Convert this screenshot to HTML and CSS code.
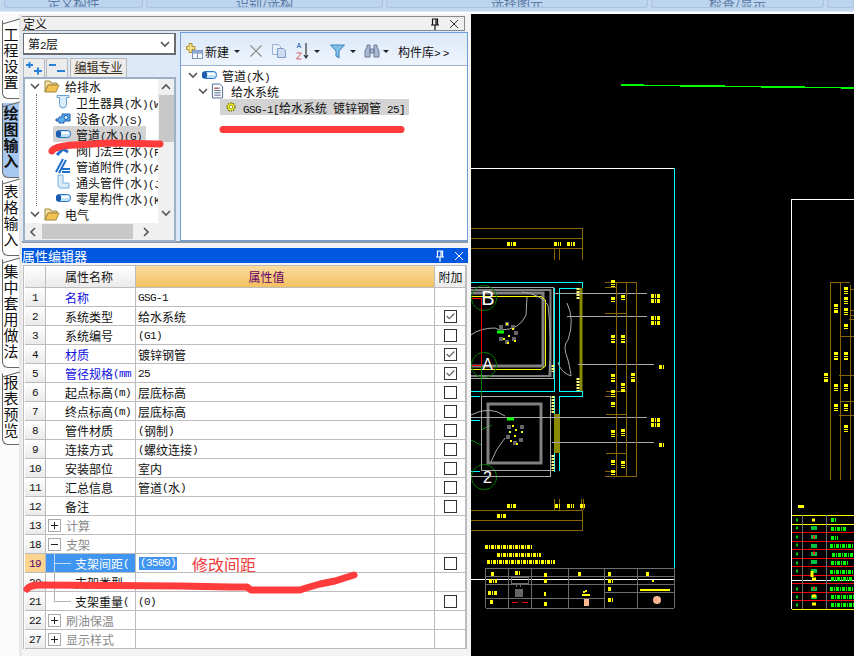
FILE: index.html
```html
<!DOCTYPE html>
<html lang="zh">
<head>
<meta charset="utf-8">
<title>定义</title>
<link rel="stylesheet" href="styles.css">
</head>
<body>
<svg class="defs">
  <symbol id="pipe" viewBox="0 0 16 16"><rect x="1.500" y="4.500" width="14" height="7" rx="3" fill="#bfe2fa" stroke="#2a73c8"/><rect x="1" y="4.500" width="5" height="7" rx="2.500" fill="#1c5cb0"/><rect x="7" y="6" width="7" height="2" fill="#fff"/></symbol>
  <symbol id="folder" viewBox="0 0 16 16"><path d="M1 3h5l1 2h6v2H4L1 14z" fill="#f5e2a0" stroke="#a08a40"/><path d="M4 7h11l-3 7H1z" fill="#f2c14e" stroke="#a08a40"/></symbol>
  <symbol id="chev" viewBox="0 0 10 10"><path d="M1 3l4 4 4-4" fill="none" stroke="#555" stroke-width="1.600"/></symbol>
  <symbol id="basin" viewBox="0 0 16 16"><path d="M2 1.500h12v2h-2.500v7a3.500 3.500 0 0 1-7 0v-7H2z" fill="#d8ecfa" stroke="#6aa0d0"/></symbol>
  <symbol id="pump" viewBox="0 0 16 16"><path d="M1 9h3V7h3V4h8v7H9v2H4v-2H1z" fill="#58b0ee" stroke="#1c5cb0"/><circle cx="11" cy="7.500" r="2" fill="#e0f2ff" stroke="#1c5cb0"/></symbol>
  <symbol id="fitting" viewBox="0 0 16 16"><path d="M1 14L8 1M4 15L11 2M7 11h8M7 14h8" fill="none" stroke="#1f6fd0" stroke-width="2"/></symbol>
  <symbol id="elbow" viewBox="0 0 16 16"><path d="M3 1h5v8h6v5H5l-2-2z" fill="#d8ecfa" stroke="#7ab0dc"/></symbol>
  <symbol id="valve" viewBox="0 0 16 16"><path d="M2 13l6-6 5 3" fill="none" stroke="#1f6fd0" stroke-width="3"/></symbol>
  <symbol id="doc" viewBox="0 0 14 16"><path d="M1.500.5h8l3 3v12h-11z" fill="#fff" stroke="#46608a"/><path d="M3.500 5h6M3.500 7.500h7M3.500 10h7M3.500 12.500h7" stroke="#46608a"/><path d="M3.500 5h4" stroke="#d04030"/></symbol>
  <symbol id="gear" viewBox="0 0 12 12"><circle cx="6" cy="6" r="4" fill="#f4f020" stroke="#5a5a10" stroke-width="1.200" stroke-dasharray="1.500 1"/><circle cx="6" cy="6" r="1.800" fill="#fff" stroke="#8a8a20" stroke-width=".8"/></symbol>
  <symbol id="pin" viewBox="0 0 10 12"><path d="M2.500 1h5v6h-5zM1 7h8M5 7v5M6 1v6" fill="none" stroke="currentColor" stroke-width="1.200"/></symbol>
  <symbol id="close" viewBox="0 0 10 10"><path d="M1 1l8 8M9 1l-8 8" stroke="currentColor" fill="none"/></symbol>
  <symbol id="tick" viewBox="0 0 13 13"><path d="M2 6l3 3 6-6" fill="none" stroke="#666" stroke-width="1.600"/></symbol>
</svg>

<div class="app">
  <div class="topbar">
    <div class="topbtn w-a">定义构件</div>
    <div class="topbtn w-b">识别/选构</div>
    <div class="topbtn w-c">选择图元</div>
    <div class="topbtn w-d">检查/显示</div>
    <div class="topbtn w-e"></div>
  </div>
  <div class="main">
    <nav class="rail">
      <div class="tab tab-a">工程设置</div>
      <div class="tab tab-b tab-on">绘图输入</div>
      <div class="tab tab-c">表格输入</div>
      <div class="tab tab-d">集中套用做法</div>
      <div class="tab tab-e">报表预览</div>
    </nav>
    <div class="work">
      <section class="define">
        <header class="head">
          <span class="head-title">定义</span>
          <svg class="pin"><use href="#pin"/></svg>
          <svg class="close"><use href="#close"/></svg>
        </header>
        <div class="define-body">
          <div class="left">
            <div class="combo"><span>第<span class="lat">2</span>层</span><svg class="combo-arrow"><use href="#chev"/></svg></div>
            <div class="mini">
              <button class="mini-btn"><svg width="17" height="14" viewBox="0 0 17 14"><path d="M0 4h7M3.500 1v6M8 10h8M12 6.500v7" stroke="#2a80d8" stroke-width="2" fill="none"/></svg></button>
              <button class="mini-btn"><svg width="17" height="14" viewBox="0 0 17 14"><path d="M0 4h7M8 10h8" stroke="#2a80d8" stroke-width="2" fill="none"/></svg></button>
              <div class="mini-tab">编辑专业</div>
            </div>
            <div class="ltree">
              <div class="ltree-top">
                <div class="ltree-list">
                  <div class="tr"><svg class="chev"><use href="#chev"/></svg><svg class="ic16 g4"><use href="#folder"/></svg><span>给排水</span></div>
                  <div class="tkids">
                    <div class="kid"><svg class="ic16"><use href="#basin"/></svg><span>卫生器具<span class="lat">(</span>水<span class="lat">)(W</span></span></div>
                    <div class="kid"><svg class="ic16"><use href="#pump"/></svg><span>设备<span class="lat">(</span>水<span class="lat">)(S)</span></span></div>
                    <div class="kid kid-on"><svg class="ic16"><use href="#pipe"/></svg><span>管道<span class="lat">(</span>水<span class="lat">)(G)</span></span></div>
                    <div class="kid"><svg class="ic16"><use href="#valve"/></svg><span>阀门法兰<span class="lat">(</span>水<span class="lat">)(F</span></span></div>
                    <div class="kid"><svg class="ic16"><use href="#fitting"/></svg><span>管道附件<span class="lat">(</span>水<span class="lat">)(A</span></span></div>
                    <div class="kid"><svg class="ic16"><use href="#elbow"/></svg><span>通头管件<span class="lat">(</span>水<span class="lat">)(J</span></span></div>
                    <div class="kid"><svg class="ic16"><use href="#pipe"/></svg><span>零星构件<span class="lat">(</span>水<span class="lat">)(K</span></span></div>
                  </div>
                  <div class="tr"><svg class="chev"><use href="#chev"/></svg><svg class="ic16 g4"><use href="#folder"/></svg><span>电气</span></div>
                </div>
                <div class="vbar">
                  <svg class="sb-up" width="10" height="10" viewBox="0 0 10 10"><path d="M1 7l4-4 4 4" fill="none" stroke="#555" stroke-width="1.600"/></svg>
                  <div class="vthumb"></div>
                  <svg class="sb-down" width="10" height="10" viewBox="0 0 10 10"><path d="M1 3l4 4 4-4" fill="none" stroke="#555" stroke-width="1.600"/></svg>
                </div>
              </div>
              <div class="hbar">
                <svg width="10" height="10" viewBox="0 0 10 10"><path d="M7 1L3 5l4 4" fill="none" stroke="#555" stroke-width="1.600"/></svg>
                <div class="hthumb"></div>
                <svg width="10" height="10" viewBox="0 0 10 10"><path d="M3 1l4 4-4 4" fill="none" stroke="#555" stroke-width="1.600"/></svg>
              </div>
            </div>
          </div>
          <div class="right">
            <div class="toolbar">
              <svg class="tb-new" width="17" height="16" viewBox="0 0 17 16"><path d="M3 0.500h3v3h3v3H6v3H3v-3H0.500v-3H3z" fill="#f4e28a" stroke="#b09030"/><rect x="6.500" y="7.500" width="10" height="8" fill="#f4f8fc" stroke="#7a94b8"/><path d="M6.500 10h10M11.500 10v5.500" stroke="#7a94b8"/><rect x="6.500" y="7.500" width="10" height="2.500" fill="#8eaad0"/></svg>
              <span class="tb-text">新建</span>
              <i class="drop d-new"></i>
              <svg class="tb-x" width="12" height="12" viewBox="0 0 12 12"><path d="M.5.500l11 11M11.500.500l-11 11" stroke="#8a8a8a" stroke-width="1.200"/></svg>
              <svg class="tb-copy" width="16" height="14" viewBox="0 0 16 14"><path d="M1.500.5h6l2 2v8h-8z" fill="#e8eef8" stroke="#9ab0d0"/><path d="M6.500 4.500h6l2 2v7h-8z" fill="#cfdcf0" stroke="#7f9cc8"/></svg>
              <svg class="tb-sort" width="14" height="18" viewBox="0 0 14 18"><path d="M2 6l2-5 2 5M3 4.500h2" fill="none" stroke="#4a7ac0"/><path d="M1.500 11h5l-5 6h5" fill="none" stroke="#d06060"/><path d="M11 1v14M9 13l2 3 2-3" fill="none" stroke="#333" stroke-width="1.200"/></svg>
              <i class="drop d-sort"></i>
              <svg class="tb-filter" width="15" height="15" viewBox="0 0 15 15"><path d="M.5 1h14L9 7v7L6 12V7z" fill="#7fc0ea" stroke="#3a82b8"/></svg>
              <i class="drop d-filter"></i>
              <svg class="tb-bino" width="16" height="14" viewBox="0 0 16 14"><path d="M1 13V7l2-4V1h3v12zM15 13V7l-2-4V1h-3v12zM6 5h4v4H6z" fill="#aab8d0" stroke="#6a7a98"/></svg>
              <i class="drop d-bino"></i>
              <span class="tb-text tb-lib">构件库<span class="lat wide">&gt;&gt;</span></span>
            </div>
            <div class="rtree">
              <div class="rrow r1"><svg class="chev"><use href="#chev"/></svg><svg class="ic16 g1"><use href="#pipe"/></svg><span>管道<span class="lat">(</span>水<span class="lat">)</span></span></div>
              <div class="rrow r2"><svg class="chev"><use href="#chev"/></svg><svg class="ic-doc"><use href="#doc"/></svg><span>给水系统</span></div>
              <div class="rrow r3"><div class="rsel"><svg class="ic-gear"><use href="#gear"/></svg><span class="pre"><span class="lat">GSG-1[</span>给水系统<span class="lat"> </span>镀锌钢管<span class="lat"> 25]</span></span></div></div>
            </div>
          </div>
        </div>
      </section>

      <section class="props">
        <header class="props-title">
          <span>属性编辑器</span>
          <svg class="pin"><use href="#pin"/></svg>
          <svg class="close"><use href="#close"/></svg>
        </header>
        <div class="grid">
          <div class="row row-head"><div class="c idx"></div><div class="c name center">属性名称</div><div class="c val val-head">属性值</div><div class="c add add-head">附加</div></div>
          <div class="row"><div class="c idx">1</div><div class="c name link">名称</div><div class="c val"><span class="lat">GSG-1</span></div><div class="c add"></div></div>
          <div class="row"><div class="c idx">2</div><div class="c name">系统类型</div><div class="c val">给水系统</div><div class="c add"><span class="cb"><svg><use href="#tick"/></svg></span></div></div>
          <div class="row"><div class="c idx">3</div><div class="c name">系统编号</div><div class="c val"><span class="lat">(G1)</span></div><div class="c add"><span class="cb"></span></div></div>
          <div class="row"><div class="c idx">4</div><div class="c name link">材质</div><div class="c val">镀锌钢管</div><div class="c add"><span class="cb"><svg><use href="#tick"/></svg></span></div></div>
          <div class="row"><div class="c idx">5</div><div class="c name link">管径规格<span class="lat">(mm</span></div><div class="c val"><span class="lat">25</span></div><div class="c add"><span class="cb"><svg><use href="#tick"/></svg></span></div></div>
          <div class="row"><div class="c idx">6</div><div class="c name">起点标高<span class="lat">(m)</span></div><div class="c val">层底标高</div><div class="c add"><span class="cb"></span></div></div>
          <div class="row"><div class="c idx">7</div><div class="c name">终点标高<span class="lat">(m)</span></div><div class="c val">层底标高</div><div class="c add"><span class="cb"></span></div></div>
          <div class="row"><div class="c idx">8</div><div class="c name">管件材质</div><div class="c val"><span class="lat">(</span>钢制<span class="lat">)</span></div><div class="c add"><span class="cb"></span></div></div>
          <div class="row"><div class="c idx">9</div><div class="c name">连接方式</div><div class="c val"><span class="lat">(</span>螺纹连接<span class="lat">)</span></div><div class="c add"><span class="cb"></span></div></div>
          <div class="row"><div class="c idx">10</div><div class="c name">安装部位</div><div class="c val">室内</div><div class="c add"><span class="cb"></span></div></div>
          <div class="row"><div class="c idx">11</div><div class="c name">汇总信息</div><div class="c val">管道<span class="lat">(</span>水<span class="lat">)</span></div><div class="c add"><span class="cb"></span></div></div>
          <div class="row"><div class="c idx">12</div><div class="c name">备注</div><div class="c val"></div><div class="c add"><span class="cb"></span></div></div>
          <div class="row"><div class="c idx">13</div><div class="c name group"><i class="exp plus"></i>计算</div><div class="c val"></div><div class="c add"></div></div>
          <div class="row"><div class="c idx">18</div><div class="c name group"><i class="exp"></i>支架</div><div class="c val"></div><div class="c add"></div></div>
          <div class="row row-on"><div class="c idx idx-on">19</div><div class="c name sub sub-on">支架间距<span class="lat">(</span></div><div class="c val"><span class="sel-val lat">(3500)</span><span class="note">修改间距</span></div><div class="c add"><span class="cb"></span></div></div>
          <div class="row"><div class="c idx">20</div><div class="c name sub">支架类型</div><div class="c val"></div><div class="c add"></div></div>
          <div class="row"><div class="c idx">21</div><div class="c name sub sub-end">支架重量<span class="lat">(</span></div><div class="c val"><span class="lat">(0)</span></div><div class="c add"><span class="cb"></span></div></div>
          <div class="row"><div class="c idx">22</div><div class="c name group"><i class="exp plus"></i>刷油保温</div><div class="c val"></div><div class="c add"></div></div>
          <div class="row"><div class="c idx">27</div><div class="c name group"><i class="exp plus"></i>显示样式</div><div class="c val"></div><div class="c add"></div></div>
        </div>
      </section>
    </div>

    <svg class="cad" viewBox="471 14 383 642" width="383" height="642">
      <!-- top run -->
      <path class="gn" d="M621 85h23" stroke-width="2"/><path class="gn" d="M644 85.500h36"/><path class="gn" d="M680 86h45" stroke-width="2"/><path class="gn" d="M725 86.500h36"/><path class="gn" d="M761 87h44" stroke-width="2"/><path class="gn" d="M805 87.500h36"/><path class="gn" d="M841 88h13" stroke-width="2"/>
      <!-- sheet frames -->
      <path class="wh" d="M471 168.500H674"/>
      <path class="cy" d="M674.500 168V568"/>
      <path class="wh" d="M791.500 609V199.500H854"/>
      <path class="wh" d="M471 579.500H674"/>
      <!-- upper dimensions -->
      <path class="br" d="M471 228.500H582.500V260M471 238.500H582M471 248.500H582M554.500 248V260M559.500 248V260"/>
      <path class="lb" d="M507 244h9M554 244h7M567 244h8"/>
      <!-- cyan walls -->
      <path class="cy" d="M471 282.500H582.500V288M559 288.500H582M554.500 288V391.500H471M559.500 288V391M559 391.500H582.500V396.500H559.500V414.500H554.500V396M471 396.500H480M554.500 453V471.500M559.500 453V471M471 471.500H480M471 420.500H480"/>
      <!-- room one -->
      <path class="lg" d="M471 287.500H553.500V378.500H471"/>
      <path class="gr2" d="M471 290H550.500V376H471"/>
      <path class="gr3" d="M471 293H543V366H471"/>
      <path class="ye1" d="M471 296.500H541L545.500 300V366L541 369.500H471"/>
      <path class="lg nf" d="M471 335Q480 328 495 328L500 330Q520 330 526 315L527 297M522 292Q540 294 548 305Q552 340 549 375M567 303Q575 320 568 340Q562 345 568 360Q571 373 571 376Q560 372 558 362"/>
      <path class="ol" d="M581 288V391"/>
      <path class="ylb" d="M578 288V300M578 378V391M553 365V372"/>
      <path class="lg" d="M554 293.500H647M567 316.500H647M578 364.500H654"/>
      <!-- fixture one -->
      <g class="fx">
        <rect x="499" y="325" width="4" height="4"/><rect x="505" y="322" width="4" height="4"/><rect x="511" y="325" width="4" height="4"/><rect x="514" y="331" width="4" height="4"/><rect x="499" y="337" width="4" height="4"/><rect x="505" y="340" width="4" height="4"/><rect x="512" y="337" width="4" height="4"/>
      </g>
      <path class="ydot" d="M506 324h2M512 329h2M503 339h2M508 336h2M514 341h2M507 343h2"/>
      <path class="gn" d="M497 332h7" stroke-width="3"/>
      <!-- red risers and grid bubbles -->
      <path class="rd" d="M472 298.500H481.500V365.500H472"/>
      <path class="gd" d="M481 366V445L471 440M481 430L492 425"/>
      <circle class="bub" cx="484" cy="298" r="12.500"/><circle class="bub" cx="484" cy="365" r="12.500"/><circle class="bub" cx="484" cy="477" r="12.500"/>
      <text class="bubt bubt-b" x="488" y="305">B</text><text class="bubt" x="487.500" y="370">A</text><text class="bubt" x="487.500" y="483">2</text>
      <!-- room two -->
      <path class="lg" d="M481 396.500H550V476.500H471M481 396V470H550"/>
      <path class="gr3" d="M488 404H541V463H488z"/>
      <path class="lg nf" d="M471 415Q490 405 505 416M505 438Q495 450 491 462"/>
      <path class="ol" d="M555.500 414V453M558.500 414V453"/>
      <path class="ylb" d="M553 396V414M553 455V471"/>
      <path class="lg" d="M471 417.500H647M552 442.500H654"/>
      <g class="fx">
        <rect x="507" y="425" width="4" height="4"/><rect x="520" y="425" width="4" height="4"/><rect x="506" y="435" width="4" height="4"/><rect x="519" y="438" width="4" height="4"/><rect x="513" y="441" width="4" height="4"/>
      </g>
      <path class="ydot" d="M512 426h2M515 430h2M509 432h2M521 432h2M514 436h2M510 441h2M516 444h2"/>
      <path class="gn" d="M507 419h7" stroke-width="3"/>
      <!-- right dimensions -->
      <path class="br" d="M605 282.500H636.500V476.500H605M616.500 282V477M626.500 282V476M605 287.500H616M605 313.500H626M606 391.500H626M605 396.500H616M606 414.500H626M606 453.500H627M605 471.500H616"/>
      <path class="lv" d="M613 280v7M613 297v6M613 335v8M613 374v8M613 390v7M613 402v6M623 295v6M623 335v8M623 383v10M633 373v10M613 430v7M613 460v5M613 470v6M623 429v7M623 461v7"/>
      <path class="lb" d="M651 296h10M651 301h10M651 318h10M651 323h10M659 367h6M651 420h10M651 425h10M659 445h6"/>
      <!-- lower dimensions -->
      <path class="br" d="M554.500 499V510M559.500 499V510M581.500 499V510M583.500 499V510M471 510.500H582.500V530.500H471M471 520.500H582"/>
      <path class="lb" d="M507 506h9M555 506h6M567 506h7M580 506h5M497 516h10"/>
      <!-- notes -->
      <path class="lb" d="M485 547h48M497 555h44M487 562h68"/>
      <!-- title block -->
      <path class="tb" d="M485.500 568.500H674M485.500 576.500H674M485.500 584.500H674M485.500 598.500H604M604 592.500H674M485.500 608.500H674M485.500 568V608M508.500 568V608M531.500 568V608M568.500 568V608M604.500 568V608M637.500 568V608M674.500 568V608"/>
      <rect class="tb-fill" x="515" y="589" width="8" height="8"/>
      <path class="tb" d="M511 577h17v6h-17zM516 583v4M520 583v4"/>
      <path class="lb" d="M491 574h4M515 573h5M544 575h4M578 574h4M608 574h4M646 574h4M489 581h8M544 581h3M608 581h5M488 593h10M544 594h2M608 589h4M608 600h6M544 604h4M490 602h4"/>
      <path class="rd" d="M512 602.500h6M522 602.500h6"/>
      <path class="ydot" d="M585 591h2M582 595h8M583 592h2M652 581h2M640 590h30"/>
      <rect class="peach" x="584" y="599" width="5" height="7"/>
      <circle class="peach" cx="657" cy="600" r="4"/>
      <!-- right drawing labels -->
      <path class="br" d="M830.500 282V480M840.500 282V480M850.500 285V480M830 282.500H850M840 336.500H854M839 375.500H854M840 401.500H854M839 415.500H854M850 289.500H854M850 310.500H854M850 315.500H854M849 319.500H854"/>
      <path class="lv" d="M846 287v7M846 297v7M846 308v7M846 324v6M836 304v9M846 352v8M836 352v8M836 384v7M846 384v7M836 404v7M846 404v7M826 373v10M846 425v7"/>
      <!-- legend table -->
      <rect class="yrect" x="798" y="505" width="6" height="3"/>
      <path class="yl" d="M792 515.500H854M792 524.500H854M792 609.500H854"/>
      <path class="rl" d="M792 532.500H854M792 541.500H854M792 549.500H854M792 558.500H854M792 566.500H854M792 575.500H854M792 583.500H854M792 592.500H854M792 600.500H854"/>
      <path class="wh" d="M792 580.500H854"/>
      <path class="tb" d="M802.500 515V609M826.500 515V609"/>
      <path class="gt" d="M831 520h6M831 529h16M831 538h7M830 546h24M832 555h22M831 563h18M830 572h24M831 579h22M830 589h24M831 597h23M831 605h23"/>
      <path class="gi" d="M796 520h2M796 528h2M796 537h2M796 545h2M796 554h2M796 563h2M796 571h2M796 589h2M796 597h2M796 605h2"/>
      <path class="gi2" d="M811 528h6M811 537h6M811 546h6M811 554h6M811 562h6M811 571h6M811 589h6M811 597h6"/>
      <path class="ri" d="M813 537h2M813 553h2M813 588h2M813 596h2"/>
      <path class="yi" d="M812 520h3M812 571v6M812 579h4M812 596h4M812 604h4"/>
    </svg>
  </div>
</div>

<svg class="marks" width="854" height="656" viewBox="0 0 854 656">
  <path d="M52 151Q54 146 75 145L110 143L160 144" stroke-width="7"/>
  <path d="M223 129.500H401" stroke-width="7"/>
  <path d="M27 589Q30 585 40 585L180 586L230 587H247L251 590H300L306 588L320 584L335 581L354 575" stroke-width="7"/>
</svg>
</body>
</html>
```
FILE: styles.css
```css
* { box-sizing: border-box; }
html, body { margin: 0; padding: 0; }
body {
  width: 854px;
  height: 656px;
  overflow: hidden;
  position: relative;
  background: #f4f4f4;
  font-family: "Noto Sans CJK SC", "Liberation Sans", sans-serif;
  font-size: 12px;
  color: #111;
}
.defs { display: none; }
.lat {
  font-family: "Liberation Mono", monospace;
  font-size: 11px;
  letter-spacing: -.6px;
  white-space: pre;
}
.wide { letter-spacing: 2px; }
.pre { white-space: pre; }

.app { display: flex; flex-direction: column; width: 854px; height: 656px; }

/* top strip */
.topbar {
  height: 14px;
  display: flex;
  gap: 3px;
  padding: 0 3px 0 4px;
  background: linear-gradient(#c3d8ef 0, #c3d8ef 11px, #fff 12px);
  flex: none;
}
.topbtn {
  height: 8px;
  background: #bdd4ee;
  border: 1px solid #a9c3e0;
  border-top: 0;
  border-radius: 0 0 3px 3px;
  text-align: center;
  font-size: 13px;
  line-height: 5px;
  color: #5a7aa6;
  overflow: hidden;
}
.w-a { width: 139px; }
.w-b { width: 237px; }
.w-c { width: 262px; }
.w-d { width: 173px; }
.w-e { flex: 1; margin-right: -3px; }

.main { display: flex; flex: 1; min-height: 0; }

/* vertical tabs */
.rail {
  width: 22px;
  flex: none;
  padding-top: 6px;
  background: #fafafa;
  border-right: 3px solid;
  border-image: linear-gradient(90deg, #8d9bab 66%, #e8e8e8 66%) 1;
}
.tab {
  width: 17px;
  margin-left: 2px;
  text-align: center;
  font-size: 15px;
  line-height: 16px;
  background: #fff;
  border: 1px solid #666;
  border-right: 0;
  border-top-color: transparent;
  border-radius: 0 0 0 6px;
  color: #111;
  position: relative;
}
.tab::before {
  content: "";
  position: absolute;
  left: -1px;
  top: 0;
  width: 18px;
  height: 1px;
  background: #666;
  transform: translateY(0) rotate(-16deg);
}
.tab-a { height: 79px; padding-top: 5px; }
.tab-b { height: 75px; margin-top: 4px; padding-top: 1px; }
.tab-c { height: 76px; margin-top: 2px; padding-top: 2px; }
.tab-d { height: 109px; margin-top: 3px; padding-top: 3px; }
.tab-e { height: 72px; margin-top: 5px; padding-top: 0; }
.tab-on { background: #a6c8f0; font-weight: 700; }

.work { width: 449px; flex: none; padding-top: 2px; display: flex; flex-direction: column; }

/* definition dock */
.define { height: 227px; flex: none; padding-right: 3px; border-bottom: 2px solid #8c9aa8; width: 446px; }
.head {
  height: 15px;
  display: flex;
  align-items: center;
  background: #f0f0f0;
  border: 1px solid #8a8a8a;
  border-left: 0;
  padding-right: 5px;
  color: #111;
}
.head-title { flex: 1; padding-left: 1px; line-height: 13px; }
.pin { width: 10px; height: 12px; color: #111; margin-right: 9px; }
.close { width: 10px; height: 10px; color: #333; }

.define-body {
  height: 210px;
  display: flex;
  background: #dce9f9;
  padding-top: 1px;
  gap: 4px;
}
.left { width: 154px; padding-left: 1px; flex: none; }
.combo {
  height: 22px;
  margin-top: 1px;
  background: #fff;
  border: 2px solid #6c6c6c;
  border-top-width: 1px;
  border-left-width: 1px;
  display: flex;
  align-items: center;
  padding: 0 4px;
  justify-content: space-between;
  font-size: 12px;
}
.combo-arrow { width: 10px; height: 10px; }
.mini { display: flex; height: 19px; margin-top: 3px; gap: 1px; }
.mini-btn {
  width: 22px;
  height: 19px;
  padding: 0;
  background: #ececec;
  border: 1px solid #b8b8b8;
  border-bottom: 0;
  display: flex;
  align-items: center;
  justify-content: center;
}
.mini-tab {
  margin-left: 1px;
  width: 57px;
  background: #ececec;
  border: 1px solid #b8b8b8;
  border-bottom: 0;
  text-align: center;
  font-size: 12px;
  line-height: 16px;
  text-decoration: underline;
  color: #3a3020;
}
.ltree {
  height: 165px;
  background: #fff;
  border: 2px solid #9cb0c8;
  display: flex;
  flex-direction: column;
}
.ltree-top { display: flex; flex: 1; min-height: 0; }
.ltree-list { width: 133px; overflow: hidden; flex: none; margin-top: -1px; }
.tr { height: 16px; display: flex; align-items: center; padding-left: 5px; white-space: nowrap; }
.chev { width: 10px; height: 10px; flex: none; }
.ic16 { width: 16px; height: 16px; flex: none; }
.g4 { margin: 0 5px 0 4px; }
.tkids { margin-left: 11px; border-left: 1px dotted #777; }
.kid {
  height: 16px;
  display: flex;
  align-items: center;
  gap: 5px;
  margin-left: 16px;
  padding-left: 2px;
  white-space: nowrap;
}
.kid-on { background: #d3d3d3; width: 93px; }
.vbar { width: 16px; flex: none; display: flex; flex-direction: column; align-items: center; background: #f0f0f0; }
.sb-up { margin-top: 3px; flex: none; }
.vthumb { width: 15px; height: 47px; background: #c8c8c8; margin-top: 3px; }
.sb-down { margin-top: 66px; flex: none; }
.hbar { height: 17px; flex: none; background: #f0f0f0; display: flex; align-items: center; padding-left: 3px; }
.hthumb { width: 91px; height: 15px; background: #c8c8c8; margin: 0 8px 0 4px; }

.right { width: 288px; flex: none; border: 1px solid #6e9fd8; height: 209px; background: #dce9f9; }
.toolbar {
  height: 32px;
  display: flex;
  align-items: center;
  padding-left: 5px;
  padding-top: 4px;
  background: linear-gradient(#dce9f9, #eef4fc);
}
.tb-text { font-size: 12px; white-space: nowrap; }
.tb-new { margin-right: 2px; }
.drop {
  width: 0; height: 0;
  border-left: 3px solid transparent;
  border-right: 3px solid transparent;
  border-top: 3px solid #222;
}
.d-new { margin-left: 5px; }
.tb-x { margin-left: 10px; }
.tb-copy { margin-left: 9px; }
.tb-sort { margin-left: 8px; }
.d-sort { margin-left: 5px; }
.tb-filter { margin-left: 10px; }
.d-filter { margin-left: 5px; }
.tb-bino { margin-left: 8px; }
.d-bino { margin-left: 3px; }
.tb-lib { margin-left: 9px; }
.rtree { height: 175px; background: #fff; padding-top: 1px; border-top: 1px solid #9cb0c8; }
.rrow { height: 16px; display: flex; align-items: center; white-space: nowrap; }
.r1 { padding-left: 7px; }
.g1 { margin: 0 5px 0 3px; }
.r2 { padding-left: 17px; }
.ic-doc { width: 13px; height: 16px; margin: 0 7px 0 3px; flex: none; }
.r3 { padding-left: 39px; }
.rsel { display: flex; align-items: center; height: 16px; background: #d3d3d3; width: 189px; padding-left: 5px; }
.ic-gear { width: 12px; height: 12px; margin-right: 6px; flex: none; }

/* property editor */
.props { margin-top: 5px; width: 446px; }
.props-title {
  height: 15px;
  background: #0058e0;
  color: #fff;
  display: flex;
  align-items: center;
  font-size: 13px;
  padding-right: 4px;
}
.props-title span { flex: 1; line-height: 15px; }
.props-title .pin, .props-title .close { color: #fff; }
.grid {
  margin: 2px 0 0 1px;
  width: 444px;
  padding-left: 1px;
  border: 1px solid #bcbcbc;
  border-width: 1px 2px 0 1px;
  background: #fff;
}
.row {
  display: grid;
  grid-template-columns: 21px 90px 299px 31px;
  height: 19px;
}
.row-head { height: 22px; }
.c {
  border-right: 1px solid #bcbcbc;
  border-bottom: 1px solid #bcbcbc;
  display: flex;
  align-items: center;
  white-space: nowrap;
  overflow: hidden;
  line-height: 18px;
  padding-top: 1px;
}
.idx {
  background: linear-gradient(#fff, #eaeaea);
  justify-content: center;
  font-family: "Liberation Mono", monospace;
  font-size: 11px;
  letter-spacing: -.6px;
}
.idx-on { background: #fbd48f; color: #5a0070; }
.name { padding-left: 19px; }
.center { background: linear-gradient(#fff, #eaeaea); }
.link { color: #1010e0; }
.val { padding-left: 2px; }
.val-head {
  justify-content: center;
  background: linear-gradient(#fbdc9f, #f2c060);
  color: #660066;
  font-size: 12px;
  padding-right: 39px;
}
.add { justify-content: center; padding-left: 1px; padding-top: 0; }
.add-head { background: linear-gradient(#fff, #eaeaea); font-size: 12px; }
.cb {
  width: 13px;
  height: 13px;
  border: 1px solid #333;
  display: block;
  background: #fff;
}
.cb svg { display: block; width: 11px; height: 11px; }
.group { color: #8a8a8a; padding-left: 2px; }
.exp {
  width: 13px;
  height: 13px;
  margin-right: 5px;
  border: 1px solid #aaa;
  background: linear-gradient(#222, #222) center / 7px 1px no-repeat;
  flex: none;
}
.exp.plus {
  background:
    linear-gradient(#222, #222) center / 7px 1px no-repeat,
    linear-gradient(#222, #222) center / 1px 7px no-repeat;
}
.sub {
  padding-left: 29px;
  background:
    linear-gradient(#b0b0b0, #b0b0b0) 8px 0 / 1px 100% no-repeat,
    linear-gradient(#b0b0b0, #b0b0b0) 8px 50% / 17px 1px no-repeat;
}
.sub-end {
  background:
    linear-gradient(#b0b0b0, #b0b0b0) 8px 0 / 1px 50% no-repeat,
    linear-gradient(#b0b0b0, #b0b0b0) 8px 50% / 17px 1px no-repeat;
}
.sub-on {
  background:
    linear-gradient(#c6dcf6, #c6dcf6) 8px 0 / 1px 100% no-repeat,
    linear-gradient(#c6dcf6, #c6dcf6) 8px 50% / 17px 1px no-repeat,
    #3f95f0;
  color: #fff;
}
.sel-val { background: #3f95f0; color: #fff; line-height: 13px; padding: 0 1px; margin-left: 1px; }
.note { color: #f03a3a; font-size: 16px; margin-left: 15px; line-height: 18px; }

/* drawing */
.cad { flex: none; display: block; background: #000; }
.cad path { fill: none; }
.cad .br, .cad .cy, .cad .wh, .cad .lg, .cad .tb, .cad .rl, .cad .yl, .cad .rd, .cad .gd { shape-rendering: crispEdges; }
.br { stroke: #8a6400; }
.cy { stroke: #00ffff; }
.wh { stroke: #fff; }
.lg { stroke: #a8a8a8; }
.cad .nf { shape-rendering: auto; }
.gn { stroke: #00ff00; }
.gr2 { stroke: #808080; stroke-width: 2; }
.gr3 { stroke: #808080; stroke-width: 3; }
.ye1 { stroke: #ffff00; }
.ol { stroke: #8a8a00; stroke-width: 3; }
.ylb { stroke: #ffff80; stroke-width: 3; stroke-dasharray: 2 1; }
.rd { stroke: #ff0000; }
.gd { stroke: #008000; }
.bub { fill: none; stroke: #008000; stroke-dasharray: 6 .5; }
.bubt { fill: #fff; font-family: "Liberation Sans", sans-serif; font-size: 16px; text-anchor: middle; }
.bubt-b { font-size: 20px; }
.fx rect { fill: #666; }
.ydot { stroke: #ffff00; stroke-width: 2; }
.lb { stroke: #ffff00; stroke-width: 4; stroke-dasharray: 3 1 1 1; }
.lv { stroke: #ffff00; stroke-width: 4; stroke-dasharray: 3 1 1 1; }
.tb { stroke: #6c6c6c; }
.tb-fill { fill: #666; }
.peach { fill: #f6b78e; }
.yrect { fill: #ffff00; }
.yl { stroke: #ffff00; }
.rl { stroke: #ff0000; }
.gt { stroke: #00ff00; stroke-width: 4; stroke-dasharray: 3 1 1 1; }
.gi { stroke: #00c000; stroke-width: 3; }
.gi2 { stroke: #00c040; stroke-width: 4; }
.ri { stroke: #ff2020; stroke-width: 3; }
.yi { stroke: #ffff00; stroke-width: 3; }

/* hand-drawn marks over the screenshot */
.marks { position: absolute; left: 0; top: 0; pointer-events: none; }
.marks path { fill: none; stroke: #ff3b3b; stroke-linecap: round; stroke-linejoin: round; }
```
